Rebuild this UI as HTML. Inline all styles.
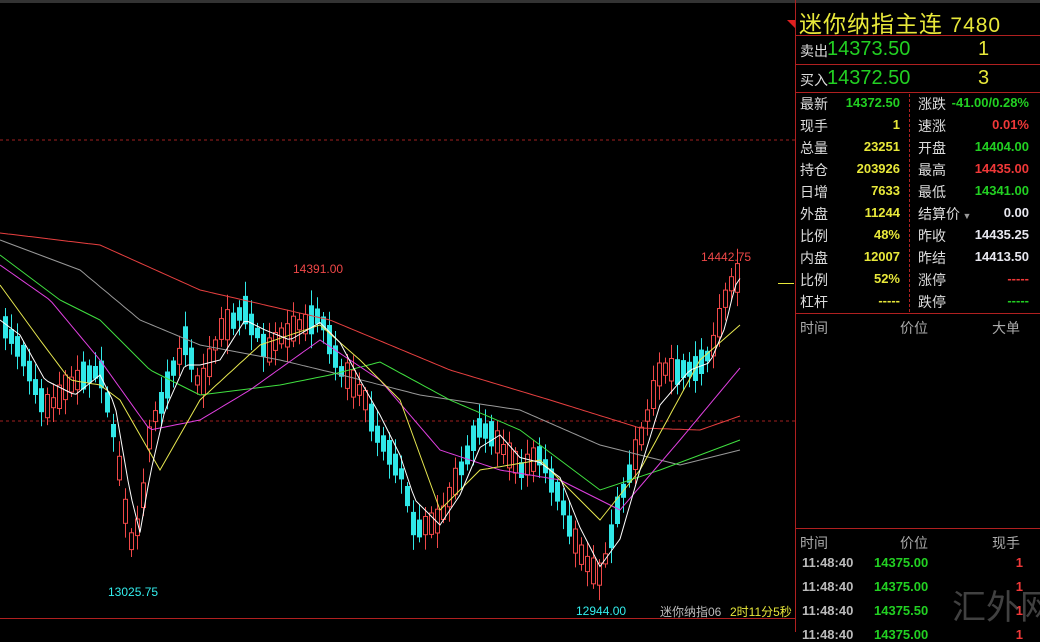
<!DOCTYPE html>
<html><head><meta charset="utf-8">
<style>
body{margin:0;background:#000;width:1040px;height:632px;overflow:hidden;position:relative;font-family:"Liberation Sans","Noto Sans CJK SC",sans-serif;}
.a{position:absolute;white-space:nowrap}
.p{position:absolute;left:795px;top:0;width:245px;height:632px;border-left:1px solid #b02020}
.hl{position:absolute;left:0;width:245px;height:1px;background:#b02020}
.lb{position:absolute;left:4px;font-size:14px;color:#ddd}
.v{position:absolute;font-size:13px;font-weight:bold;text-align:right}
.y{color:#e8e83a}.g{color:#22d022}.r{color:#f03838}.w{color:#e8e8f0}.gr{color:#bbb}
</style></head><body>
<div class="a" style="left:0;top:0;width:1040px;height:3px;background:#333"></div>
<div id="cw" style="position:absolute;left:0;top:0;width:795px;height:632px"></div>
<div class="a" style="left:293px;top:262px;font-size:12px;color:#f04848">14391.00</div>
<div class="a" style="left:701px;top:250px;font-size:12px;color:#f04848">14442.75</div>
<div class="a" style="left:108px;top:585px;font-size:12px;color:#3ee">13025.75</div>
<div class="a" style="left:576px;top:604px;font-size:12px;color:#3ee">12944.00</div>
<div class="a" style="left:660px;top:603px;font-size:12px;color:#bbb">迷你纳指06</div>
<div class="a" style="left:730px;top:603px;font-size:12px;color:#e8e83a">2时11分5秒</div>
<div class="a" style="left:0;top:618px;width:795px;height:1px;background:#b02020"></div>
<div class="p">
 <div class="a" style="left:3px;top:5px;font-size:23px;color:#e8e83a;letter-spacing:1px">迷你纳指主连 <span style="font-size:21px">7480</span></div>
 <div class="hl" style="top:35px"></div>
 <div class="lb" style="top:41px">卖出</div><div class="a g" style="left:31px;top:38px;font-size:20px">14373.50</div><div class="a y" style="left:182px;top:38px;font-size:20px">1</div>
 <div class="hl" style="top:64px"></div>
 <div class="lb" style="top:70px">买入</div><div class="a g" style="left:31px;top:67px;font-size:20px">14372.50</div><div class="a y" style="left:182px;top:67px;font-size:20px">3</div>
 <div class="hl" style="top:92px"></div>
 <div class="a" style="left:113px;top:94px;height:218px;border-left:1px dashed #b02020"></div>
 <div id="rows"></div>
 <div class="hl" style="top:313px"></div>
 <div class="lb" style="top:318px;color:#aaa">时间</div><div class="lb" style="left:104px;top:318px;color:#aaa">价位</div><div class="lb" style="left:196px;top:318px;color:#aaa">大单</div>
 <div class="hl" style="top:528px"></div>
 <div class="lb" style="top:533px;color:#aaa">时间</div><div class="lb" style="left:104px;top:533px;color:#aaa">价位</div><div class="lb" style="left:196px;top:533px;color:#aaa">现手</div>
 <div id="ticks"></div>
</div>
<div class="a" style="left:952px;top:580px;font-size:34px;color:rgba(130,130,130,.5)">汇外网</div>
<div class="a" style="left:778px;top:283px;width:16px;height:1px;background:#e8e83a"></div>
<svg class="a" style="left:787px;top:20px" width="8" height="8"><polygon points="0,0 8,0 8,8" fill="#e02020"/></svg>
<script>
(function(){
var R=[["最新","14372.50","g","涨跌","-41.00/0.28%","g"],["现手","1","y","速涨","0.01%","r"],["总量","23251","y","开盘","14404.00","g"],["持仓","203926","y","最高","14435.00","r"],["日增","7633","y","最低","14341.00","g"],["外盘","11244","y","结算价<span style=\"font-size:9px;color:#999\"> ▼</span>","0.00","w"],["比例","48%","y","昨收","14435.25","w"],["内盘","12007","y","昨结","14413.50","w"],["比例","52%","y","涨停","-----","r"],["杠杆","-----","y","跌停","-----","g"]];
var h="";R.forEach(function(r,i){var t=94+i*22;h+='<div class="lb" style="top:'+t+'px">'+r[0]+'</div><div class="v '+r[2]+'" style="right:141px;top:'+(t+1)+'px">'+r[1]+'</div><div class="lb" style="left:122px;top:'+t+'px">'+r[3]+'</div><div class="v '+r[5]+'" style="right:12px;top:'+(t+1)+'px">'+r[4]+'</div>';});
document.getElementById("rows").innerHTML=h;
var T=["14375.00","14375.00","14375.50","14375.00"];h="";
T.forEach(function(p,i){var t=555+i*24;h+='<div class="v gr" style="left:6px;top:'+t+'px">11:48:40</div><div class="v g" style="left:78px;top:'+t+'px">'+p+'</div><div class="v r" style="right:18px;top:'+t+'px">1</div>';});
document.getElementById("ticks").innerHTML=h;
function ip(P,x){for(var i=0;i<P.length-1;i++){if(x>=P[i][0]&&x<=P[i+1][0]){var f=(x-P[i][0])/(P[i+1][0]-P[i][0]);return P[i][1]+f*(P[i+1][1]-P[i][1]);}}return P[P.length-1][1];}
var K=[[0,320],[20,350],[45,410],[75,380],[100,370],[115,440],[130,545],[140,520],[150,430],[165,390],[185,340],[200,390],[220,330],[245,310],[265,350],[290,330],[320,315],[340,370],[360,390],[380,440],[400,470],[415,530],[440,520],[460,470],[480,425],[500,445],[520,470],[540,455],[560,500],[580,555],[600,578],[620,500],[640,440],[660,370],[690,370],[710,355],[725,300],[735,272],[740,285]];
var s='<svg width="795" height="632"><line x1="0" y1="140" x2="795" y2="140" stroke="#a02020" stroke-dasharray="3,3"/><line x1="0" y1="421" x2="795" y2="421" stroke="#a02020" stroke-dasharray="3,3"/>';
for(var x=3;x<=740;x+=6){
 var m=ip(K,x+2),sl=ip(K,x+8)-ip(K,x-4);
 var amp=8+Math.abs(Math.sin(x*0.37))*14;
 var sgn=Math.sin(x*1.13+0.5);
 var up=sl<0?(sgn>-0.6):(sgn>0.6);
 var tp=m-amp*(0.4+0.3*Math.abs(Math.cos(x*0.7))),bt=m+amp*(0.4+0.3*Math.abs(Math.sin(x*0.9)));
 var wt=tp-3-Math.abs(Math.sin(x*0.9))*12,wb=bt+3+Math.abs(Math.cos(x*1.3))*12;
 var col=up?"#f04848":"#30e8e8";var xm=(x+2.5).toFixed(1);
 s+='<line x1="'+xm+'" y1="'+wt.toFixed(1)+'" x2="'+xm+'" y2="'+wb.toFixed(1)+'" stroke="'+col+'" stroke-width="1"/>';
 if(up){s+='<rect x="'+(x+0.5).toFixed(1)+'" y="'+tp.toFixed(1)+'" width="4" height="'+(bt-tp).toFixed(1)+'" fill="#000" stroke="'+col+'"/>';}
 else{s+='<rect x="'+x+'" y="'+tp.toFixed(1)+'" width="5" height="'+(bt-tp).toFixed(1)+'" fill="'+col+'"/>';}
}
function pl(P,col){var d="";for(var x=0;x<=P[P.length-1][0];x+=4)d+=x+","+ip(P,x).toFixed(1)+" ";return '<polyline points="'+d+'" fill="none" stroke="'+col+'" stroke-width="1"/>';}
s+=pl([[0,233],[100,245],[200,290],[330,320],[450,370],[550,400],[640,428],[700,430],[740,416]],"#e84040");
s+=pl([[0,240],[80,270],[140,320],[200,345],[280,360],[330,372],[420,395],[520,410],[600,445],[680,465],[740,450]],"#999");
s+=pl([[0,255],[60,300],[100,320],[150,370],[200,395],[280,385],[330,375],[380,362],[450,400],[520,430],[600,490],[660,470],[740,440]],"#40e040");
s+=pl([[0,265],[50,300],[100,360],[150,430],[200,420],[250,390],[320,340],[380,380],[440,450],[500,470],[560,480],[620,510],[680,440],[740,368]],"#e040e0");
s+=pl([[0,285],[40,340],[70,380],[100,385],[120,400],[160,470],[200,400],[260,345],[320,325],[360,360],[400,400],[440,510],[480,470],[540,460],[600,520],[640,470],[700,360],[740,325]],"#e8e850");
var W=K.map(function(p,i){return [p[0],i>0?(p[1]+K[i-1][1])/2:p[1]];});
s+=pl(W,"#fff");
s+='</svg>';
document.getElementById("cw").innerHTML=s;
})();
</script>
</body></html>
